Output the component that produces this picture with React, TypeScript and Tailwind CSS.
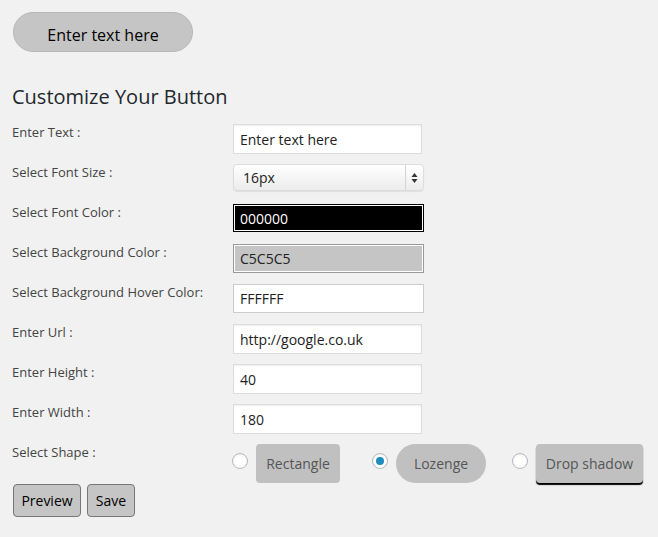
import { useState } from 'react';

const fields = [
  { label: 'Enter Text :', kind: 'text', value: 'Enter text here' },
  { label: 'Select Font Size :', kind: 'select', value: '16px' },
  { label: 'Select Font Color :', kind: 'dark', value: '000000' },
  { label: 'Select Background Color :', kind: 'grey', value: 'C5C5C5' },
  { label: 'Select Background Hover Color:', kind: 'white', value: 'FFFFFF' },
  { label: 'Enter Url :', kind: 'text', value: 'http://google.co.uk' },
  { label: 'Enter Height :', kind: 'text', value: '40' },
  { label: 'Enter Width :', kind: 'text', value: '180' },
];

function Radio({ checked, onClick }: { checked: boolean; onClick: () => void }) {
  return (
    <span
      onClick={onClick}
      className="mt-[11px] flex h-[16px] w-[16px] shrink-0 cursor-pointer items-center justify-center rounded-full border border-[#b4b9be] bg-white shadow-[inset_0_1px_2px_rgba(0,0,0,0.07)]"
    >
      {checked && <span className="h-[8px] w-[8px] rounded-full bg-[#1e8cbe]" />}
    </span>
  );
}

export default function App() {
  const [shape, setShape] = useState('lozenge');

  // 입력 종류별 스타일
  const inputClass = (kind: string) => {
    if (kind === 'dark')
      return 'w-[191px] h-[28px] border border-black bg-black text-white shadow-[inset_0_0_0_1px_#fff]';
    if (kind === 'grey')
      return 'w-[191px] h-[29px] border border-[#9a9a9a] bg-[#c5c5c5] text-[#222] shadow-[inset_0_0_0_1px_#fff]';
    if (kind === 'white') return 'w-[191px] h-[29px] border border-[#ccc] bg-white text-[#222]';
    return 'w-[189px] h-[30px] border border-[#ddd] bg-white text-[#222] shadow-[inset_0_1px_2px_rgba(0,0,0,0.07)]';
  };

  return (
    <div className="min-h-[537px] w-full bg-[#f1f1f1] font-['Open_Sans',sans-serif] text-[#444]">
      <div className="pl-[13px] pt-[12px]">
        <button className="flex h-[40px] w-[180px] items-center justify-center rounded-full border border-[#b8b8b8] bg-[#c5c5c5] pt-[5px] text-[16px] text-black">
          Enter text here
        </button>
      </div>

      <div className="pl-[12px]">
        <h2 className="mt-[32px] h-[26px] text-[20px] leading-[26px] text-[#23282d]">Customize Your Button</h2>

        <div className="mt-[12px]">
          {fields.map((f) => (
            <div key={f.label} className="flex h-[40px] items-start">
              <label className="w-[221px] shrink-0 text-[13px] leading-[20px]">{f.label}</label>
              {f.kind === 'select' ? (
                <div className="mt-[2px] flex h-[27px] w-[191px] items-center rounded-[4px] border border-[#ddd] bg-gradient-to-b from-white to-[#ececec] shadow-[0_1px_1px_rgba(0,0,0,0.08)]">
                  <span className="flex-1 pl-[9px] text-[14px] text-[#222]">{f.value}</span>
                  <span className="flex h-full w-[18px] items-center justify-center border-l border-[#d4d4d4]">
                    <svg width="7" height="12" viewBox="0 0 7 12">
                      <path d="M3.5 1 L6.5 5 L0.5 5 Z" fill="#333" />
                      <path d="M3.5 11 L6.5 7 L0.5 7 Z" fill="#333" />
                    </svg>
                  </span>
                </div>
              ) : (
                <div className={`mt-[2px] flex items-center px-[6px] text-[14px] ${inputClass(f.kind)}`}>
                  {f.value}
                </div>
              )}
            </div>
          ))}

          <div className="flex h-[42px] items-start">
            <label className="w-[220px] shrink-0 text-[13px] leading-[20px]">Select Shape :</label>
            <Radio checked={shape === 'rectangle'} onClick={() => setShape('rectangle')} />
            <button className="ml-[8px] mt-[2px] h-[39px] w-[84px] rounded-[4px] bg-[#c0c0c0] text-[14px] text-[#555]">
              Rectangle
            </button>
            <span className="ml-[32px]" />
            <Radio checked={shape === 'lozenge'} onClick={() => setShape('lozenge')} />
            <button className="ml-[8px] mt-[2px] h-[39px] w-[90px] rounded-full bg-[#c0c0c0] text-[14px] text-[#555]">
              Lozenge
            </button>
            <span className="ml-[26px]" />
            <Radio checked={shape === 'shadow'} onClick={() => setShape('shadow')} />
            <button className="ml-[8px] mt-[2px] h-[39px] w-[107px] rounded-[4px] bg-[#c0c0c0] text-[14px] text-[#555] shadow-[0_2px_1px_#000]">
              Drop shadow
            </button>
          </div>
        </div>

        <div className="flex gap-[6px] pl-[1px]">
          <button className="h-[33px] w-[68px] rounded-[4px] border border-[#777] bg-[#c5c5c5] text-[14px] text-black">
            Preview
          </button>
          <button className="h-[33px] w-[48px] rounded-[4px] border border-[#777] bg-[#c5c5c5] text-[14px] text-black">
            Save
          </button>
        </div>
      </div>
    </div>
  );
}
